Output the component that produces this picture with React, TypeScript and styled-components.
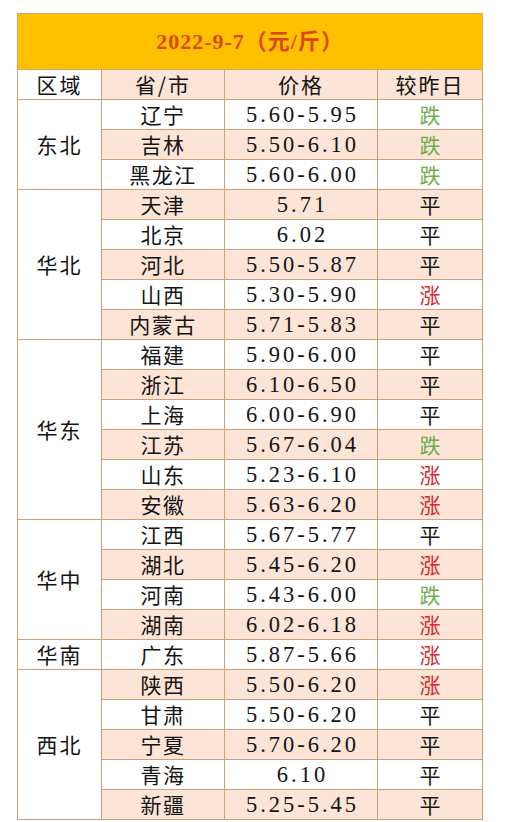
import React from 'react';
import styled, { createGlobalStyle } from 'styled-components';

const GlobalStyle = createGlobalStyle`
  html, body {
    margin: 0;
    padding: 0;
    background: #ffffff;
  }
`;

const Page = styled.div`
  padding: 13px 23px 0 17px;
  font-family: "Liberation Serif", "Noto Sans CJK SC", serif;
  color: #141414;
`;

const Table = styled.table`
  width: 465px;
  border-collapse: collapse;
  table-layout: fixed;
`;

const TitleCell = styled.th`
  height: 55px;
  padding: 0;
  background: #ffc000;
  border: 1px solid #d8a96e;
  color: #d9471c;
  font-size: 22px;
  font-weight: bold;
  letter-spacing: 1px;
  text-align: center;
  line-height: 1;
  font-family: "Liberation Serif", "Noto Sans CJK SC", serif;
`;

const HeadCell = styled.th<{ $white?: boolean }>`
  height: 29px;
  padding: 0;
  background: ${(p) => (p.$white ? '#ffffff' : '#fce4d6')};
  border: 1px solid #c9a27c;
  font-family: "Noto Sans CJK SC", sans-serif;
  font-weight: 400;
  font-size: 21px;
  letter-spacing: 2px;
  text-align: center;
  line-height: 1;
`;

const Row = styled.tr<{ $pink: boolean }>`
  background: ${(p) => (p.$pink ? '#fce4d6' : '#ffffff')};
`;

const Cell = styled.td`
  height: 29px;
  padding: 0;
  border: 1px solid #c9a27c;
  text-align: center;
  vertical-align: middle;
  line-height: 1;
`;

const RegionCell = styled(Cell)`
  background: #ffffff;
  font-family: "Noto Sans CJK SC", sans-serif;
  font-size: 21px;
  letter-spacing: 2px;
`;

const ProvinceCell = styled(Cell)`
  font-family: "Noto Sans CJK SC", sans-serif;
  font-size: 21px;
  letter-spacing: 1.5px;
`;

const PriceCell = styled(Cell)`
  height: 27px;
  padding: 2px 0 0 3px;
  font-family: "Liberation Serif", serif;
  font-size: 22.5px;
  letter-spacing: 3px;
`;

const trendColor: Record<string, string> = {
  跌: '#6fae4e',
  涨: '#d9272e',
  平: '#141414',
};

const TrendCell = styled(Cell)<{ $trend: string }>`
  font-family: "Noto Sans CJK SC", sans-serif;
  font-size: 21px;
  color: ${(p) => trendColor[p.$trend]};
`;

type Item = [string, string, string];

const regions: { name: string; items: Item[] }[] = [
  {
    name: '东北',
    items: [
      ['辽宁', '5.60-5.95', '跌'],
      ['吉林', '5.50-6.10', '跌'],
      ['黑龙江', '5.60-6.00', '跌'],
    ],
  },
  {
    name: '华北',
    items: [
      ['天津', '5.71', '平'],
      ['北京', '6.02', '平'],
      ['河北', '5.50-5.87', '平'],
      ['山西', '5.30-5.90', '涨'],
      ['内蒙古', '5.71-5.83', '平'],
    ],
  },
  {
    name: '华东',
    items: [
      ['福建', '5.90-6.00', '平'],
      ['浙江', '6.10-6.50', '平'],
      ['上海', '6.00-6.90', '平'],
      ['江苏', '5.67-6.04', '跌'],
      ['山东', '5.23-6.10', '涨'],
      ['安徽', '5.63-6.20', '涨'],
    ],
  },
  {
    name: '华中',
    items: [
      ['江西', '5.67-5.77', '平'],
      ['湖北', '5.45-6.20', '涨'],
      ['河南', '5.43-6.00', '跌'],
      ['湖南', '6.02-6.18', '涨'],
    ],
  },
  {
    name: '华南',
    items: [['广东', '5.87-5.66', '涨']],
  },
  {
    name: '西北',
    items: [
      ['陕西', '5.50-6.20', '涨'],
      ['甘肃', '5.50-6.20', '平'],
      ['宁夏', '5.70-6.20', '平'],
      ['青海', '6.10', '平'],
      ['新疆', '5.25-5.45', '平'],
    ],
  },
];

export default function App() {
  let index = 0;
  return (
    <Page>
      <GlobalStyle />
      <Table>
        <colgroup>
          <col style={{ width: 84 }} />
          <col style={{ width: 123 }} />
          <col style={{ width: 153 }} />
          <col style={{ width: 105 }} />
        </colgroup>
        <thead>
          <tr>
            <TitleCell colSpan={4}>2022-9-7（元/斤）</TitleCell>
          </tr>
          <tr>
            <HeadCell $white>区域</HeadCell>
            <HeadCell>省/市</HeadCell>
            <HeadCell>价格</HeadCell>
            <HeadCell>较昨日</HeadCell>
          </tr>
        </thead>
        <tbody>
          {regions.map((region) =>
            region.items.map(([province, price, trend], i) => {
              const pink = index % 2 === 1;
              index += 1;
              return (
                <Row key={province} $pink={pink}>
                  {i === 0 && (
                    <RegionCell rowSpan={region.items.length}>{region.name}</RegionCell>
                  )}
                  <ProvinceCell>{province}</ProvinceCell>
                  <PriceCell>{price}</PriceCell>
                  <TrendCell $trend={trend}>{trend}</TrendCell>
                </Row>
              );
            })
          )}
        </tbody>
      </Table>
    </Page>
  );
}
